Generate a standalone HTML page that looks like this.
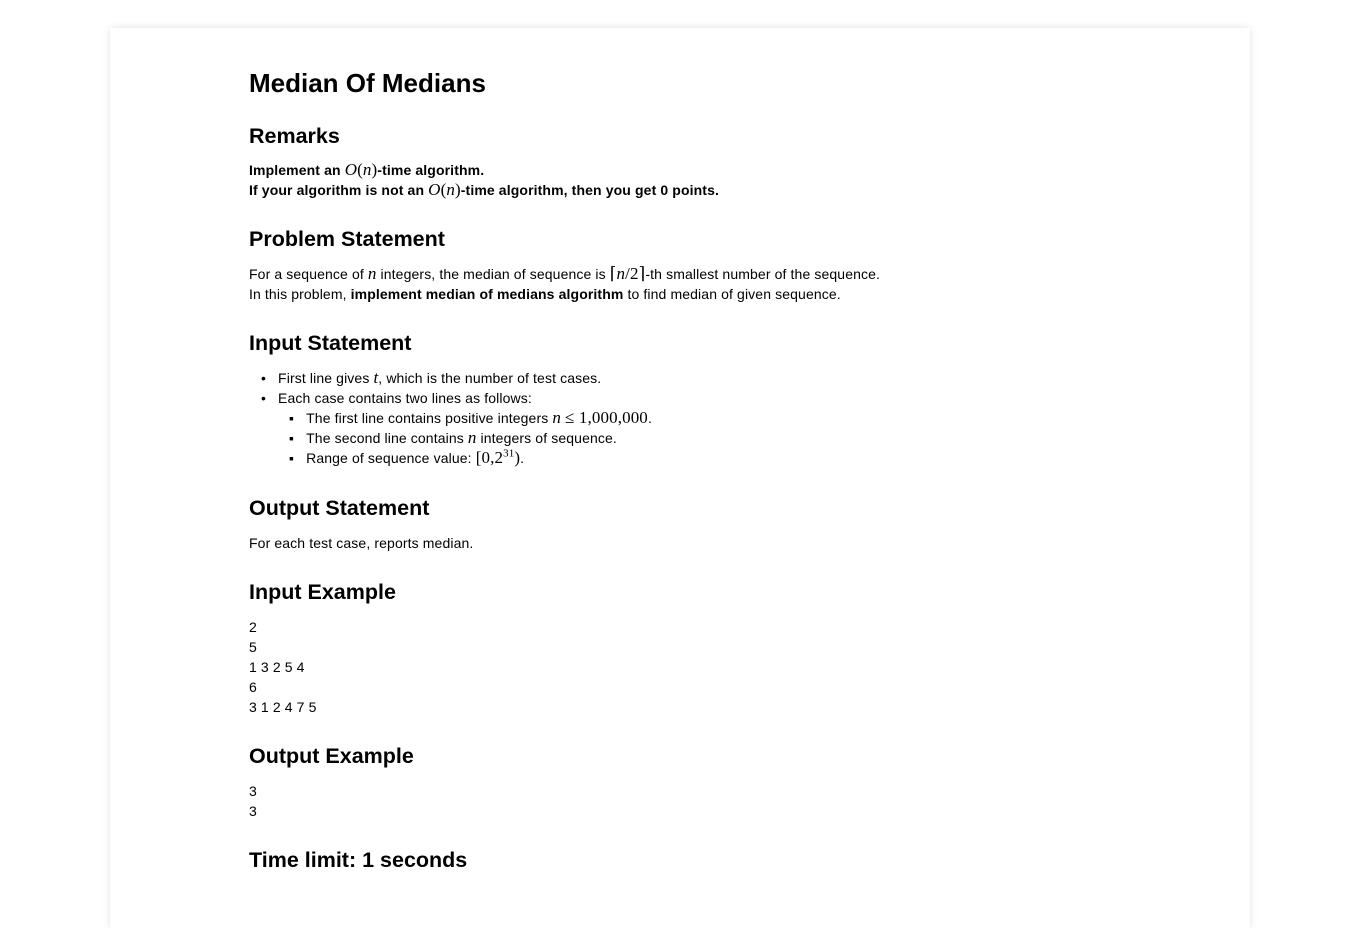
<!DOCTYPE html>
<html><head><meta charset="utf-8"><style>
html,body{margin:0;padding:0;background:#fff;}
body{width:1360px;height:899px;overflow:hidden;position:relative;font-family:"Liberation Sans",Arial,sans-serif;color:#000;}
.card{position:absolute;left:110px;top:28px;width:1140px;height:900px;background:#fff;box-shadow:0 0 8px rgba(0,0,0,0.12);}
.l{position:absolute;left:249px;font-size:14px;line-height:20px;white-space:nowrap;letter-spacing:0.12px;}
.h{position:absolute;left:249px;font-weight:bold;line-height:30px;white-space:nowrap;}
.m{font-family:"Liberation Serif","DejaVu Serif",serif;font-style:italic;font-size:17px;font-weight:normal;line-height:10px;}
.r{font-family:"Liberation Serif","DejaVu Serif",serif;font-size:17px;font-weight:normal;line-height:10px;}
sup{line-height:0;font-size:11px;}
</style></head><body>
<div class="card"></div>
<div class="h" style="top:68px;font-size:26px">Median Of Medians</div>
<div class="h" style="top:121px;font-size:21.5px">Remarks</div>
<div class="l" style="top:160px;font-weight:bold">Implement an <span class="m">O</span><span class="r">(</span><span class="m">n</span><span class="r">)</span>-time algorithm.</div>
<div class="l" style="top:180px;font-weight:bold">If your algorithm is not an <span class="m">O</span><span class="r">(</span><span class="m">n</span><span class="r">)</span>-time algorithm, then you get 0 points.</div>
<div class="h" style="top:224px;font-size:21.5px">Problem Statement</div>
<div class="l" style="top:264px">For a sequence of <span class="m">n</span> integers, the median of sequence is <span class="r">⌈</span><span class="m">n</span><span class="r">/2⌉</span>-th smallest number of the sequence.</div>
<div class="l" style="top:284px">In this problem, <b>implement median of medians algorithm</b> to find median of given sequence.</div>
<div class="h" style="top:328px;font-size:21.5px">Input Statement</div>
<div class="l" style="top:368px;left:261px">•&nbsp;&nbsp;&nbsp;First line gives <span class="m">t</span>, which is the number of test cases.</div>
<div class="l" style="top:388px;left:261px">•&nbsp;&nbsp;&nbsp;Each case contains two lines as follows:</div>
<div class="l" style="top:408px;left:289px">▪&nbsp;&nbsp;&nbsp;The first line contains positive integers <span class="m">n</span> <span class="r">≤ 1,000,000</span>.</div>
<div class="l" style="top:428px;left:289px">▪&nbsp;&nbsp;&nbsp;The second line contains <span class="m">n</span> integers of sequence.</div>
<div class="l" style="top:448px;left:289px">▪&nbsp;&nbsp;&nbsp;Range of sequence value: <span class="r">[0,2<sup>31</sup>)</span>.</div>
<div class="h" style="top:493px;font-size:21.5px">Output Statement</div>
<div class="l" style="top:533px">For each test case, reports median.</div>
<div class="h" style="top:577px;font-size:21.5px">Input Example</div>
<div class="l" style="top:617px">2</div>
<div class="l" style="top:637px">5</div>
<div class="l" style="top:657px">1 3 2 5 4</div>
<div class="l" style="top:677px">6</div>
<div class="l" style="top:697px">3 1 2 4 7 5</div>
<div class="h" style="top:741px;font-size:21.5px">Output Example</div>
<div class="l" style="top:781px">3</div>
<div class="l" style="top:801px">3</div>
<div class="h" style="top:845px;font-size:21.5px">Time limit: 1 seconds</div>
</body></html>
